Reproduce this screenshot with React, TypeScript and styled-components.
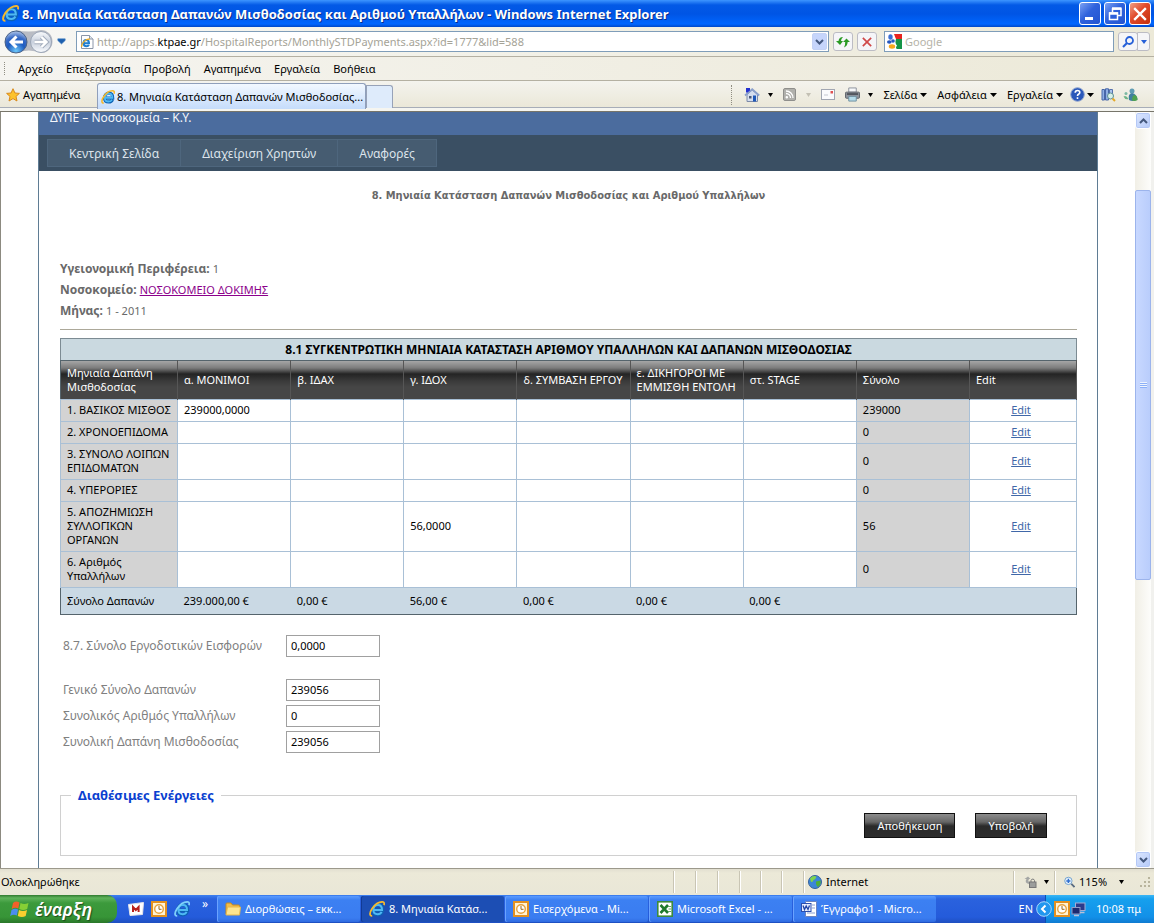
import React from "react";
import styled, { createGlobalStyle } from "styled-components";

const Global = createGlobalStyle`
  *, *::before, *::after { box-sizing: border-box; }
  body { margin: 0; font-family: "Noto Sans", "DejaVu Sans", sans-serif; font-size: 11px; line-height: 16px; color: #000; }
  button, input { font: inherit; color: inherit; margin: 0; }
  svg { display: block; flex: none; }
`;

/* ---------- icons ---------- */

const IeIcon = ({ size = 16, ring = "#f5b92e" }: { size?: number; ring?: string }) => (
  <svg width={size} height={size} viewBox="0 0 16 16" fill="none">
    <path d="M4.500 9.200H13.400C13.600 5.400 11.800 3.600 9 3.600S4 5.800 4 9s2 4.600 4.800 4.600c2.200 0 3.600-1 4.300-2.700" stroke="#0d62b4" strokeWidth="3.600" />
    <path d="M4.500 8.900H13C13 5.600 11.600 4 9 4S4.400 6 4.400 9s1.800 4.200 4.400 4.200c2 0 3.100-.9 3.800-2.300" stroke="#4fb9f4" strokeWidth="2" />
    <path d="M3.200 14.800C.2 15.200.4 11.500 3.200 7.400 6 3.400 10.500.800 13.600.900c1.700.1 2 1.600 1.300 3.300" stroke={ring} strokeWidth="1.800" />
  </svg>
);

const PageIcon = () => (
  <svg width="14" height="14" viewBox="0 0 14 14">
    <path d="M1.500.5H9.500L13 4V13.500H1.500Z" fill="#fff" stroke="#8b96a8" />
    <path d="M9.500.5V4H13" fill="#dfe5ee" stroke="#8b96a8" />
    <path d="M3.500 8.300H9C9 6 8 5 6.300 5S3.500 6.300 3.500 8.300s1.100 3 3 3c1.100 0 2-.5 2.400-1.400" fill="none" stroke="#1f7ed0" strokeWidth="2" />
    <path d="M1.500 12C1 8.500 5.500 3.800 9.800 4" fill="none" stroke="#e9ad2a" strokeWidth="1.300" />
  </svg>
);

const NavArrows = () => (
  <svg width="50" height="26" viewBox="0 0 50 26">
    <defs>
      <radialGradient id="back" cx="50%" cy="90%" r="90%">
        <stop offset="0" stopColor="#6cc8fa" />
        <stop offset=".45" stopColor="#1f5cc0" />
        <stop offset=".7" stopColor="#3a6cc6" />
        <stop offset="1" stopColor="#b4c8ea" />
      </radialGradient>
      <linearGradient id="fwd" x1="0" y1="0" x2="0" y2="1">
        <stop offset="0" stopColor="#fafbfd" />
        <stop offset=".5" stopColor="#c8d0dd" />
        <stop offset="1" stopColor="#fafcff" />
      </linearGradient>
    </defs>
    <path d="M12 1Q25 4 37 1A11.500 11.500 0 0 1 37 24Q25 19 12 24Z" fill="#b9bcc4" />
    <circle cx="12" cy="13" r="11" fill="url(#back)" stroke="#4b6286" />
    <circle cx="37" cy="13" r="10.500" fill="url(#fwd)" stroke="#9aa5b6" />
    <path d="M19 13H7M12.500 7.500L7 13L12.500 18.500" fill="none" stroke="#fff" strokeWidth="3" />
    <path d="M30.500 13H42M37.500 8L42.500 13L37.500 18" fill="none" stroke="#a3adbd" strokeWidth="4.400" />
    <path d="M30.500 13H42M37.500 8L42.500 13L37.500 18" fill="none" stroke="#fff" strokeWidth="2.400" />
  </svg>
);

const HistoryArrow = () => (
  <svg width="9" height="7" viewBox="0 0 9 7">
    <path d="M.8.8H8.200V2.500L4.500 6L.8 2.500Z" fill="#1d5fae" stroke="#4e86c4" strokeWidth=".6" />
  </svg>
);

const Triangle = ({ color = "#000", w = 7 }: { color?: string; w?: number }) => (
  <svg width={w} height="4" viewBox="0 0 8 4" preserveAspectRatio="none">
    <path d="M0 0H8L4 4Z" fill={color} />
  </svg>
);

const Chevron = ({ up }: { up?: boolean }) => (
  <svg width="9" height="6" viewBox="0 0 9 6" fill="none" stroke="#44587e" strokeWidth="2">
    <path d={up ? "M1 5L4.500 1.500L8 5" : "M1 1L4.500 4.500L8 1"} />
  </svg>
);

const StarIcon = () => (
  <svg width="14" height="14" viewBox="0 0 14 14">
    <path d="M7 .7L8.900 5L13.400 5.400L10 8.400L11 13L7 10.600L3 13L4 8.400L.6 5.400L5.100 5Z" fill="#fdc22c" stroke="#d98a1c" />
  </svg>
);

const RefreshIcon = () => (
  <svg width="14" height="12" viewBox="0 0 14 12" fill="#2a9a24">
    <path d="M0 5L4 9L7 5H5Q5 3 7 1Q3 1 2.500 5Z" />
    <path d="M7 6L10.500 2.500L14 6H11.700Q11.500 10 8 11.500Q9.300 9.500 9.200 6Z" />
  </svg>
);

const CrossIcon = ({ color, size = 12 }: { color: string; size?: number }) => (
  <svg width={size} height={size} viewBox="0 0 12 12" stroke={color} strokeWidth="2">
    <path d="M1 1L11 11M11 1L1 11" />
  </svg>
);

const GoogleMark = () => (
  <svg width="15" height="15" viewBox="0 0 15 15">
    <rect width="15" height="15" fill="#fff" />
    <path d="M7 0H15V5H9Q8 3 7 0Z" fill="#e8251f" />
    <path d="M9 5H15V15H10Q8 14 10 11.500Q7.500 9 9 5Z" fill="#159447" />
    <ellipse cx="3.500" cy="3" rx="2.200" ry="2.700" fill="#3b6fd4" />
    <ellipse cx="2.300" cy="8" rx="2.300" ry="1.800" fill="#2457c0" />
    <circle cx="6" cy="7" r="1.800" fill="#2457c0" />
    <ellipse cx="5" cy="12.500" rx="3.200" ry="2.200" fill="#f5a81c" />
  </svg>
);

const SearchIcon = () => (
  <svg width="12" height="12" viewBox="0 0 12 12" fill="none" stroke="#2760d8">
    <circle cx="7.500" cy="4.500" r="3.500" strokeWidth="1.800" />
    <path d="M5 7L1 11" strokeWidth="2.200" />
  </svg>
);

const HomeIcon = () => (
  <svg width="16" height="16" viewBox="0 0 16 16">
    <path d="M3 7.500V14.500H13.500V7.500L8.200 3Z" fill="#d5deef" stroke="#7c8aa8" />
    <path d="M1 8.500L8.200 2.200L15.200 8.500" fill="none" stroke="#8ba0cc" strokeWidth="1.800" />
    <path d="M2 1H6V3.500L3.500 5.500H2Z" fill="#2431d0" />
    <path d="M5 9H7.500V11.500H5Z" fill="#4b5a78" />
    <path d="M9 8.500H12V14.500H9Z" fill="#1e58b8" />
  </svg>
);

const FeedIcon = () => (
  <svg width="13" height="13" viewBox="0 0 13 13" fill="none" stroke="#fff" strokeWidth="1.300">
    <rect x=".5" y=".5" width="12" height="12" rx="1.500" fill="#b0b0ac" stroke="#8f8f8c" strokeWidth="1" />
    <path d="M3 5.500A4.500 4.500 0 0 1 7.500 10M3 3A7 7 0 0 1 10 10" />
    <circle cx="3.800" cy="9.300" r=".6" fill="#fff" />
  </svg>
);

const MailIcon = () => (
  <svg width="14" height="11" viewBox="0 0 14 11">
    <rect x=".5" y=".5" width="13" height="10" fill="#fbfbfd" stroke="#a1a6b2" />
    <path d="M9.500 2H12V4.500H9.500Z" fill="#e05050" />
    <path d="M3 6H7" stroke="#c3c7d0" />
  </svg>
);

const PrintIcon = () => (
  <svg width="15" height="15" viewBox="0 0 16 15">
    <path d="M4 .5H12V5H4Z" fill="#f7f8fa" stroke="#8a8f9a" />
    <rect x=".5" y="5" width="15" height="6.500" rx="1" fill="#8f949c" stroke="#5b6068" />
    <path d="M2 7H14" stroke="#3c4048" strokeWidth="1.500" />
    <path d="M4 9.500H12V14.500H4Z" fill="#b5dcea" stroke="#6d8fa0" />
  </svg>
);

const HelpIcon = () => (
  <svg width="15" height="15" viewBox="0 0 15 15">
    <circle cx="7.500" cy="7.500" r="6.800" fill="#2a58ba" stroke="#8fa4cf" />
    <path d="M5.200 5.800Q5.200 3.500 7.500 3.500T9.800 5.500Q9.800 6.700 8.500 7.300Q7.500 7.800 7.500 9M7.500 10.300V12" fill="none" stroke="#fff" strokeWidth="1.600" />
  </svg>
);

const ResearchIcon = () => (
  <svg width="15" height="14" viewBox="0 0 15 14">
    <path d="M1 1.500H3.500V12H1ZM4.500.8H7.500V12H4.500Z" fill="#8faee4" stroke="#4766a8" />
    <path d="M8.500 1.500L11.500 1.500V9H8.500Z" fill="#a9c3ee" stroke="#5671ac" />
    <circle cx="9.500" cy="8" r="3" fill="#d7f0ea" stroke="#5c8f91" />
    <path d="M11.500 10.500L14 13" stroke="#e5a928" strokeWidth="2" />
  </svg>
);

const MessengerIcon = () => (
  <svg width="15" height="14" viewBox="0 0 15 14">
    <circle cx="9" cy="3" r="2.500" fill="#5f9cb4" />
    <path d="M6 12Q4.500 6 9 5Q14 6 14.500 11.500Q10 14 6 12Z" fill="#3f7f9f" />
    <path d="M9 12.500Q9 7 12 7Q14.500 8 14.500 12Q12 13.500 9 12.500Z" fill="#4ea24f" />
    <path d="M.5 8.500Q3 6.500 5.500 11Q2 12 .5 8.500Z" fill="#6db487" />
    <circle cx="3" cy="5.500" r="1.500" fill="#7cb8a4" />
  </svg>
);

const GlobeIcon = () => (
  <svg width="14" height="14" viewBox="0 0 14 14">
    <circle cx="7" cy="7" r="6.500" fill="#3c86d8" stroke="#34609c" />
    <path d="M2 3.500Q5 0 8.500 1.500Q8 4 5.500 5Q5 7.500 3 7Z" fill="#7fd44c" />
    <path d="M8 6.500L12.500 5.500Q13.500 9 10 12Q7.500 10 8 6.500Z" fill="#4fae3a" />
  </svg>
);

const LockIcon = () => (
  <svg width="14" height="12" viewBox="0 0 14 12">
    <path d="M6 8Q1 7 3.500 3H1.500L5 .5L7.500 3H6Q4.500 5 6 6Z" fill="#a4a6a4" />
    <rect x="6.500" y="6" width="6.500" height="5.500" fill="#9b9d9c" stroke="#777" />
    <path d="M8 6V4.500A1.800 1.800 0 0 1 11.500 4.500V6" fill="none" stroke="#777" />
  </svg>
);

const ZoomIcon = () => (
  <svg width="11" height="12" viewBox="0 0 12 12">
    <circle cx="4.800" cy="4.800" r="4" fill="#e9f4fd" stroke="#6c9cc9" />
    <path d="M2.500 4.800H7M4.800 2.500V7" stroke="#2d6ed0" strokeWidth="1.600" />
    <path d="M8 8L11.500 11.500" stroke="#596b80" strokeWidth="2" />
  </svg>
);

const FlagIcon = () => (
  <svg width="20" height="19" viewBox="0 0 20 19">
    <path d="M3 3Q6 .5 9.500 2.500L8.300 8.500Q5 6.800 1.700 9Z" fill="#f2602a" />
    <path d="M10.500 3Q14 5 18.500 3L17.200 9Q13 11 9.300 9Z" fill="#86cf35" />
    <path d="M1.500 10Q5 7.800 8.100 9.500L6.800 15.500Q3.500 14 .2 16Z" fill="#4c8df0" />
    <path d="M9 10Q13 12 17 10L15.700 16Q12 18 7.800 16Z" fill="#fbcf2f" />
  </svg>
);

const MBadge = () => (
  <svg width="16" height="14" viewBox="0 0 16 14">
    <path d="M.5 2.500L15.500 .5L14.500 12.500L2 13.500Z" fill="#fff" stroke="#e4e4ea" />
    <path d="M5 10V5L7.800 8L10.600 5V10" fill="none" stroke="#b8201c" strokeWidth="2" />
  </svg>
);

const OutlookIcon = () => (
  <svg width="16" height="16" viewBox="0 0 16 16">
    <rect x="1" y="1" width="14" height="14" fill="#fff3d4" stroke="#e39120" strokeWidth="2" />
    <circle cx="8" cy="8" r="4.300" fill="#fff" stroke="#e8a23c" strokeWidth="1.400" />
    <path d="M8 5V8.300H10.500" fill="none" stroke="#9a6a1c" />
  </svg>
);

const FolderIcon = () => (
  <svg width="16" height="14" viewBox="0 0 16 14">
    <path d="M1 12V2Q1 1 2 1H6L7.500 3H13.500Q14.500 3 14.500 4V12Z" fill="#f1bd4a" stroke="#c58a1e" />
    <path d="M1 13L2.500 5H15.500L14.500 13Z" fill="#fde58e" stroke="#e6b84b" />
  </svg>
);

const ExcelIcon = () => (
  <svg width="16" height="16" viewBox="0 0 16 16">
    <rect x=".8" y=".8" width="14.400" height="14.400" fill="#fff" stroke="#3c8a3c" strokeWidth="1.600" />
    <path d="M3.500 4L11 12M11 4L3.500 12" stroke="#1f7a2c" strokeWidth="2.600" />
    <path d="M11 5.500H14M11.500 8H14M11 10.500H14" stroke="#62a862" />
  </svg>
);

const WordIcon = () => (
  <svg width="16" height="16" viewBox="0 0 16 16">
    <path d="M4.500.5H15.500V15.500H4.500Z" fill="#fff" stroke="#6c83c0" />
    <path d="M11 4H14M11 7H14M6 12H14" stroke="#8b9fd4" />
    <rect x=".5" y="2.500" width="9.500" height="8" fill="#e8eeff" stroke="#2c4fae" />
    <path d="M2 4.500L3.500 8.500L5.200 5L7 8.500L8.500 4.500" fill="none" stroke="#2246a8" strokeWidth="1.300" />
  </svg>
);

const TrayArrow = () => (
  <svg width="16" height="16" viewBox="0 0 16 16">
    <circle cx="8" cy="8" r="7.300" fill="#2196ee" stroke="#a8d8fb" />
    <path d="M9.500 4.500L6 8L9.500 11.500" fill="none" stroke="#fff" strokeWidth="2" />
  </svg>
);

const NetworkIcon = () => (
  <svg width="15" height="15" viewBox="0 0 15 15">
    <rect x="4.500" y="1" width="9.500" height="7.500" fill="#2b3b8c" stroke="#a4aed4" />
    <rect x="1" y="5.500" width="8" height="6.500" fill="#1c2a70" stroke="#8f9bc6" />
    <path d="M3 13.500H8M9 10.500H13.500" stroke="#b9c0d8" strokeWidth="1.600" />
  </svg>
);

const ResizeGrip = () => (
  <svg width="10" height="10" viewBox="0 0 10 10" fill="#b8b49c">
    <path d="M8 0H10V2H8ZM8 4H10V6H8ZM4 4H6V6H4ZM8 8H10V10H8ZM4 8H6V10H4ZM0 8H2V10H0Z" />
  </svg>
);

/* ---------- browser chrome ---------- */

const Window = styled.div`
  height: 100vh;
  display: flex;
  flex-direction: column;
  background: #ece9d8;
  overflow: hidden;
`;

const TitleBar = styled.header`
  flex: none;
  height: 27px;
  display: flex;
  align-items: center;
  gap: 3px;
  padding: 0 3px 0 2px;
  background: linear-gradient(#3d95ff 0, #0359e6 5px, #0055e5 14px, #0066ff 24px, #0048c8 27px);
`;

const WindowTitle = styled.h1`
  margin: 0;
  flex: 1;
  font-size: 13px;
  font-weight: 700;
  color: #fff;
  text-shadow: 1px 1px #0a2f8a;
  white-space: nowrap;
`;

const CaptionButton = styled.button<{ $danger?: boolean }>`
  width: 22px;
  height: 23px;
  padding: 0;
  display: flex;
  align-items: center;
  justify-content: center;
  border: 1px solid #fff;
  border-radius: 3px;
  background: ${(p) =>
    p.$danger ? "linear-gradient(135deg, #f0a086, #e0492a 45%, #c4300c)" : "linear-gradient(135deg, #7ba1f3, #2f62dc 45%, #2254d0)"};
`;

const CaptionButtons = styled.div`
  display: flex;
  gap: 3px;
`;

const AddressRow = styled.div`
  flex: none;
  height: 30px;
  display: flex;
  align-items: center;
  padding: 0 4px;
  background: linear-gradient(90deg, #f7f7f4, #ece9d8);
  border-bottom: 1px solid #b4b0a2;
`;

const Plain = styled.button`
  padding: 0;
  border: 0;
  background: none;
  display: flex;
  align-items: center;
  gap: 3px;
  white-space: nowrap;
`;

const AddressBox = styled.div`
  flex: 1;
  height: 21px;
  margin-left: 10px;
  display: flex;
  align-items: center;
  gap: 3px;
  padding: 0 1px 0 3px;
  background: #fff;
  border: 1px solid #7f9db9;
`;

const Url = styled.div`
  flex: 1;
  color: #a5a397;
  white-space: nowrap;
  b { color: #000; font-weight: 400; }
`;

const DropButton = styled.button`
  width: 15px;
  height: 17px;
  padding: 0;
  display: grid;
  place-items: center;
  border: 1px solid #c4d2f4;
  border-radius: 2px;
  background: #c6d5fb;
`;

const ToolButton = styled.button<{ $w?: number }>`
  width: ${(p) => p.$w ?? 20}px;
  height: 19px;
  padding: 0;
  margin-left: 4px;
  display: grid;
  place-items: center;
  border: 1px solid #bcbcc4;
  border-radius: 3px;
  background: #f5f5f8;
`;

const SearchBox = styled.label`
  width: 230px;
  height: 21px;
  margin-left: 7px;
  display: flex;
  align-items: center;
  gap: 3px;
  padding: 0 2px;
  background: #fff;
  border: 1px solid #7f9db9;
`;

const SearchInput = styled.input`
  flex: 1;
  min-width: 0;
  border: 0;
  padding: 0;
  outline: 0;
  background: none;
  &::placeholder { color: #b5b3a8; opacity: 1; }
`;

const SplitGroup = styled.div`
  display: flex;
  ${ToolButton}:last-child { margin-left: -1px; border-radius: 0 3px 3px 0; }
`;

const MenuBar = styled.nav`
  flex: none;
  height: 24px;
  display: flex;
  align-items: center;
  gap: 13px;
  padding-left: 4px;
  background: linear-gradient(90deg, #f5f4f0, #ece9d8);
  border-bottom: 1px solid #b4b0a2;
`;

const Grip = styled.span<{ $h: number }>`
  width: 0;
  height: ${(p) => p.$h}px;
  border-left: 1px dotted #8f8d82;
`;

const TabRow = styled.div`
  flex: none;
  height: 31px;
  display: flex;
  align-items: flex-start;
  padding-left: 6px;
  background: linear-gradient(#f4f3ee, #e9e6d5);
  border-bottom: 1px solid #77756a;
  box-shadow: inset 0 -3px #f5f5f0, inset 0 -4px #a7adb8;
`;

const Favorites = styled(Plain)`
  width: 91px;
  height: 27px;
`;

const Tab = styled.button`
  width: 269px;
  height: 26px;
  margin-top: 2px;
  padding: 0 3px;
  display: flex;
  align-items: center;
  gap: 2px;
  border: 1px solid #8f9fbb;
  border-bottom: 0;
  border-radius: 3px 3px 0 0;
  background: linear-gradient(#f2f8ff, #c5dcfb);
  white-space: nowrap;
`;

const NewTab = styled.button`
  width: 27px;
  height: 23px;
  margin-top: 4px;
  padding: 0;
  border: 1px solid #97a2b8;
  border-bottom: 0;
  border-radius: 0 3px 0 0;
  background: #deebfb;
`;

const CommandBar = styled.div`
  margin-left: auto;
  height: 27px;
  padding-right: 16px;
  display: flex;
  align-items: center;
  gap: 10px;
`;

const CommandGroup = styled.div<{ $gap: number }>`
  display: flex;
  align-items: center;
  gap: ${(p) => p.$gap}px;
`;

/* ---------- page ---------- */

const Viewport = styled.div`
  flex: 1;
  min-height: 0;
  display: flex;
  background: #fff;
  border-left: 1px solid #8c8a80;
`;

const Page = styled.main`
  flex: 1;
  min-width: 0;
  margin: 0 37px;
  border: solid #5f7c94;
  border-width: 0 1px;
  overflow: hidden;
  color: #696969;
`;

const Band = styled.div`
  height: 23px;
  padding-left: 11px;
  background: #4b6c9e;
  color: #f3f6fb;
  font-size: 12px;
  line-height: 12px;
`;

const SiteNav = styled.nav`
  height: 36px;
  padding: 4px 8px;
  display: flex;
  background: #3a4f63;
`;

const SiteLink = styled.a`
  padding: 0 21px;
  border: 1px solid #4e667d;
  margin-right: -1px;
  background: #465c71;
  color: #dde4ec;
  font-size: 12px;
  line-height: 28px;
  text-decoration: none;
`;

const Body = styled.div`
  padding: 16px 20px 0 21px;
`;

const PageTitle = styled.h2`
  margin: 0 0 53px;
  text-align: center;
  font-family: "DejaVu Sans Condensed", "DejaVu Sans", sans-serif;
  font-size: 11px;
  line-height: 18px;
  font-weight: 700;
`;

const Info = styled.p`
  margin: 0;
  font-size: 12px;
  line-height: 21px;
  span { font-size: 11px; }
`;

const VisitedLink = styled.a`
  font-size: 11px;
  color: #8b008b;
`;

const Rule = styled.hr`
  margin: 8px 0;
  border: 0;
  border-top: 1px solid #aca899;
`;

const Grid = styled.table`
  width: 100%;
  table-layout: fixed;
  border-collapse: collapse;
  border: 1px solid #55646c;
  color: #000;
  line-height: 14px;
  caption {
    height: 22px;
    border: 1px solid #7c8b93;
    border-bottom: 0;
    background: #cad9e0;
    font-size: 12px;
    font-weight: 700;
    line-height: 21px;
  }
  th, td { text-align: left; vertical-align: middle; font-weight: 400; padding: 3px 0 4px 6px; }
`;

const HeadRow = styled.tr`
  height: 39px;
  background: linear-gradient(#a6a6a6 0, #7c7c7c 7px, #242424 13px, #3a3a3a 20px, #464646 26px);
  color: #fff;
  th { border-right: 1px solid #565656; }
`;

const DataRow = styled.tr`
  td, th { border: 1px solid #a9c0d6; }
`;

const RowHead = styled.th`
  background: #d3d3d3;
`;

const SumCell = styled.td`
  background: #d3d3d3;
`;

const EditCell = styled.td`
  && { text-align: center; padding-left: 0; padding-right: 4px; }
  a { color: #4067a8; }
`;

const FootRow = styled.tr`
  height: 27px;
  background: #cad9e4;
`;

const Fields = styled.div<{ $top: number }>`
  margin-top: ${(p) => p.$top}px;
  padding-left: 3px;
  display: grid;
  grid-template-columns: 223px 94px;
  row-gap: 4px;
  align-items: center;
`;

const FieldLabel = styled.label`
  font-size: 12px;
  color: #808080;
`;

const FieldInput = styled.input`
  height: 22px;
  padding: 0 4px 2px;
  border: 1px solid #a0a0a0;
  background: #fff;
  color: #000;
  min-width: 0;
`;

const Actions = styled.fieldset`
  margin: 32px 0 0;
  padding: 8px 29px 17px 10px;
  min-width: 0;
  display: flex;
  justify-content: flex-end;
  border: 1px solid #d0d0d0;
`;

const ActionsLegend = styled.legend`
  padding: 0 7px;
  color: #0a3fd0;
  font-size: 13px;
  line-height: 20px;
  font-weight: 700;
`;

const DarkButton = styled.button`
  height: 25px;
  padding: 0 12px;
  margin-left: 20px;
  border: 1px solid #111;
  background: linear-gradient(#8d8d8d 0, #666 8px, #2a2a2a 12px, #2e2e2e 25px);
  color: #fff;
  font-size: 11px;
`;

const ScrollTrack = styled.div`
  width: 19px;
  flex: none;
  display: flex;
  flex-direction: column;
  padding-right: 3px;
  background: linear-gradient(90deg, #f1efe6, #fdfdfb 16px, #f1f1ee 16px);
`;

const ScrollButton = styled.button`
  height: 17px;
  padding: 0;
  display: grid;
  place-items: center;
  border: 1px solid #fff;
  border-radius: 3px;
  background: linear-gradient(135deg, #dbe6ff, #b5caf8);
  box-shadow: inset 0 0 0 1px #b4c8f6;
`;

const ThumbArea = styled.div`
  flex: 1;
  display: flex;
  flex-direction: column;
  padding-top: 61px;
`;

const Thumb = styled.div`
  flex: 0 0 59%;
  display: grid;
  place-items: center;
  border: 1px solid #9cb4ec;
  border-radius: 2px;
  background: linear-gradient(90deg, #c8d8ff, #b9cdfc);
`;

const ThumbGrip = styled.span`
  width: 7px;
  height: 6px;
  background: repeating-linear-gradient(#eef4fe 0 1px, #8cb0f8 1px 2px);
`;

/* ---------- status bar and taskbar ---------- */

const StatusBar = styled.footer`
  flex: none;
  height: 27px;
  display: flex;
  align-items: center;
  padding: 0 4px 0 1px;
  border-top: 1px solid #9c998c;
  background: linear-gradient(#e2dfd0, #ece9d8 4px, #e9e7d7);
`;

const StatusText = styled.span`
  flex: 1;
`;

const Pane = styled.div<{ $w: number; $gap?: number; $pad?: number }>`
  width: ${(p) => p.$w}px;
  height: 22px;
  display: flex;
  align-items: center;
  gap: ${(p) => p.$gap ?? 4}px;
  padding-left: ${(p) => p.$pad ?? 4}px;
  border-left: 1px solid #c9c5b4;
  box-shadow: inset 1px 0 #fff;
`;

const ZoomLevel = styled.span`
  margin-right: 8px;
`;

const Taskbar = styled.div`
  flex: none;
  height: 28px;
  display: flex;
  background: linear-gradient(#3c81f0 0, #2a62de 4px, #245bdb 22px, #1e4fc0 28px);
  color: #fff;
`;

const StartButton = styled.button`
  width: 117px;
  padding: 0 0 0 10px;
  display: flex;
  align-items: center;
  gap: 5px;
  border: 0;
  border-radius: 0 10px 10px 0;
  background: linear-gradient(#2f7a2f 0, #5fb35c 3px, #3c9a3c 8px, #379537 22px, #2a772a 28px);
  color: #fff;
  font-size: 18px;
  line-height: 24px;
  font-weight: 600;
  font-style: italic;
  text-shadow: 1px 1px 1px #1d4c1d;
`;

const QuickLaunch = styled.div`
  width: 100px;
  display: flex;
  align-items: center;
  gap: 7px;
  padding-left: 11px;
`;

const More = styled.span`
  font-size: 12px;
  line-height: 12px;
  padding: 0 0 10px 5px;
`;

const Task = styled.button<{ $active?: boolean }>`
  flex: 0 1 143px;
  min-width: 0;
  padding: 0 0 0 8px;
  margin: 1px 1px 1px 0;
  display: flex;
  align-items: center;
  gap: 4px;
  border: 0;
  border-radius: 2px;
  background: ${(p) => (p.$active ? "#1c4eb4" : "linear-gradient(#5a9bff, #3c80f2 4px, #3a7cf0 22px, #2f6be0)")};
  box-shadow: inset 1px 0 ${(p) => (p.$active ? "#123a94" : "#6aa3ff")};
  white-space: nowrap;
`;

const Language = styled.span`
  margin-left: auto;
  padding-right: 12px;
  align-self: center;
`;

const Tray = styled.div`
  width: 109px;
  position: relative;
  display: flex;
  align-items: center;
  gap: 1px;
  padding-left: 8px;
  border-left: 1px solid #0c4fb0;
  background: linear-gradient(#3ab6f5 0, #16a0ee 4px, #1290e8 22px, #0f7bd0);
  time { margin-left: 9px; white-space: nowrap; }
`;

const TrayToggle = styled(Plain)`
  position: absolute;
  left: -10px;
  top: 6px;
`;

const menus = ["Αρχείο", "Επεξεργασία", "Προβολή", "Αγαπημένα", "Εργαλεία", "Βοήθεια"];
const siteLinks = ["Κεντρική Σελίδα", "Διαχείριση Χρηστών", "Αναφορές"];
const columns = ["α. ΜΟΝΙΜΟΙ", "β. ΙΔΑΧ", "γ. ΙΔΟΧ", "δ. ΣΥΜΒΑΣΗ ΕΡΓΟΥ", "ε. ΔΙΚΗΓΟΡΟΙ ΜΕ ΕΜΜΙΣΘΗ ΕΝΤΟΛΗ", "στ. STAGE", "Σύνολο", "Edit"];
const rows = [
  { name: "1. ΒΑΣΙΚΟΣ ΜΙΣΘΟΣ", values: ["239000,0000", "", "", "", "", ""], sum: "239000" },
  { name: "2. ΧΡΟΝΟΕΠΙΔΟΜΑ", values: ["", "", "", "", "", ""], sum: "0" },
  { name: "3. ΣΥΝΟΛΟ ΛΟΙΠΩΝ ΕΠΙΔΟΜΑΤΩΝ", values: ["", "", "", "", "", ""], sum: "0" },
  { name: "4. ΥΠΕΡΟΡΙΕΣ", values: ["", "", "", "", "", ""], sum: "0" },
  { name: "5. ΑΠΟΖΗΜΙΩΣΗ ΣΥΛΛΟΓΙΚΩΝ ΟΡΓΑΝΩΝ", values: ["", "", "56,0000", "", "", ""], sum: "56" },
  { name: "6. Αριθμός Υπαλλήλων", values: ["", "", "", "", "", ""], sum: "0" },
];
const totals = ["239.000,00 €", "0,00 €", "56,00 €", "0,00 €", "0,00 €", "0,00 €"];
const summary = [
  { id: "grand", label: "Γενικό Σύνολο Δαπανών", value: "239056" },
  { id: "count", label: "Συνολικός Αριθμός Υπαλλήλων", value: "0" },
  { id: "cost", label: "Συνολική Δαπάνη Μισθοδοσίας", value: "239056" },
];

export default function App() {
  return (
    <Window>
      <Global />
      <TitleBar>
        <IeIcon size={17} />
        <WindowTitle>8. Μηνιαία Κατάσταση Δαπανών Μισθοδοσίας και Αριθμού Υπαλλήλων - Windows Internet Explorer</WindowTitle>
        <CaptionButtons>
          <CaptionButton aria-label="Ελαχιστοποίηση">
            <svg width="14" height="14" viewBox="0 0 14 14"><path d="M2 10H10V13H2Z" fill="#fff" /></svg>
          </CaptionButton>
          <CaptionButton aria-label="Επαναφορά">
            <svg width="14" height="14" viewBox="0 0 14 14" fill="none" stroke="#fff">
              <path d="M4.500 5V2H13V8.500H10" strokeWidth="1.500" />
              <path d="M4 1.500H13.500" strokeWidth="2.500" />
              <path d="M1.500 6H9.500V12.500H1.500Z" strokeWidth="1.500" />
              <path d="M1 6.500H10" strokeWidth="2.500" />
            </svg>
          </CaptionButton>
          <CaptionButton $danger aria-label="Κλείσιμο"><CrossIcon color="#fff" size={14} /></CaptionButton>
        </CaptionButtons>
      </TitleBar>

      <AddressRow>
        <Plain aria-label="Πίσω και εμπρός"><NavArrows /><HistoryArrow /></Plain>
        <AddressBox>
          <PageIcon />
          <Url>http://apps.<b>ktpae.gr</b>/HospitalReports/MonthlySTDPayments.aspx?id=1777&amp;lid=588</Url>
          <DropButton aria-label="Διευθύνσεις"><Chevron /></DropButton>
        </AddressBox>
        <ToolButton aria-label="Ανανέωση"><RefreshIcon /></ToolButton>
        <ToolButton aria-label="Διακοπή"><CrossIcon color="#d04848" size={10} /></ToolButton>
        <SearchBox>
          <GoogleMark />
          <SearchInput placeholder="Google" aria-label="Αναζήτηση" />
        </SearchBox>
        <SplitGroup>
          <ToolButton aria-label="Αναζήτηση"><SearchIcon /></ToolButton>
          <ToolButton $w={13} aria-label="Επιλογές αναζήτησης"><Triangle color="#2760d8" w={6} /></ToolButton>
        </SplitGroup>
      </AddressRow>

      <MenuBar>
        <Grip $h={13} />
        {menus.map((m) => <Plain key={m}>{m}</Plain>)}
      </MenuBar>

      <TabRow>
        <Favorites><StarIcon />Αγαπημένα</Favorites>
        <Tab><IeIcon size={14} />8. Μηνιαία Κατάσταση Δαπανών Μισθοδοσίας...</Tab>
        <NewTab aria-label="Νέα καρτέλα" />
        <CommandBar>
          <CommandGroup $gap={12}>
            <Grip $h={20} />
            <CommandGroup $gap={8}><HomeIcon /><Triangle w={5} /></CommandGroup>
          </CommandGroup>
          <CommandGroup $gap={10}><FeedIcon /><Triangle w={5} color="#c3c0b4" /></CommandGroup>
          <MailIcon />
          <CommandGroup $gap={8}><PrintIcon /><Triangle w={5} /></CommandGroup>
          <Plain>Σελίδα<Triangle /></Plain>
          <Plain>Ασφάλεια<Triangle /></Plain>
          <CommandGroup $gap={7}>
            <Plain>Εργαλεία<Triangle /></Plain>
            <CommandGroup $gap={2}><HelpIcon /><Triangle /></CommandGroup>
            <ResearchIcon />
            <MessengerIcon />
          </CommandGroup>
        </CommandBar>
      </TabRow>

      <Viewport>
        <Page>
          <Band>ΔΥΠΕ – Νοσοκομεία – Κ.Υ.</Band>
          <SiteNav>{siteLinks.map((l) => <SiteLink href="#" key={l}>{l}</SiteLink>)}</SiteNav>
          <Body>
            <PageTitle>8. Μηνιαία Κατάσταση Δαπανών Μισθοδοσίας και Αριθμού Υπαλλήλων</PageTitle>
            <Info><b>Υγειονομική Περιφέρεια:</b> <span>1</span></Info>
            <Info><b>Νοσοκομείο:</b> <VisitedLink href="#">ΝΟΣΟΚΟΜΕΙΟ ΔΟΚΙΜΗΣ</VisitedLink></Info>
            <Info><b>Μήνας:</b> <span>1 - 2011</span></Info>
            <Rule />
            <Grid>
              <caption>8.1 ΣΥΓΚΕΝΤΡΩΤΙΚΗ ΜΗΝΙΑΙΑ ΚΑΤΑΣΤΑΣΗ ΑΡΙΘΜΟΥ ΥΠΑΛΛΗΛΩΝ ΚΑΙ ΔΑΠΑΝΩΝ ΜΙΣΘΟΔΟΣΙΑΣ</caption>
              <colgroup>
                <col width="117" />
                {columns.slice(1).map((c) => <col key={c} />)}
                <col width="107" />
              </colgroup>
              <thead>
                <HeadRow>
                  <th scope="col">Μηνιαία Δαπάνη Μισθοδοσίας</th>
                  {columns.map((c) => <th scope="col" key={c}>{c}</th>)}
                </HeadRow>
              </thead>
              <tbody>
                {rows.map((r) => (
                  <DataRow key={r.name}>
                    <RowHead scope="row">{r.name}</RowHead>
                    {r.values.map((v, i) => <td key={i}>{v}</td>)}
                    <SumCell>{r.sum}</SumCell>
                    <EditCell><a href="#">Edit</a></EditCell>
                  </DataRow>
                ))}
              </tbody>
              <tfoot>
                <FootRow>
                  <th scope="row">Σύνολο Δαπανών</th>
                  {totals.map((t, i) => <td key={i}>{t}</td>)}
                  <td />
                  <td />
                </FootRow>
              </tfoot>
            </Grid>
            <Fields $top={20}>
              <FieldLabel htmlFor="employer">8.7. Σύνολο Εργοδοτικών Εισφορών</FieldLabel>
              <FieldInput id="employer" defaultValue="0,0000" />
            </Fields>
            <Fields $top={22}>
              {summary.map((f) => (
                <React.Fragment key={f.id}>
                  <FieldLabel htmlFor={f.id}>{f.label}</FieldLabel>
                  <FieldInput id={f.id} defaultValue={f.value} />
                </React.Fragment>
              ))}
            </Fields>
            <Actions>
              <ActionsLegend>Διαθέσιμες Ενέργειες</ActionsLegend>
              <DarkButton>Αποθήκευση</DarkButton>
              <DarkButton>Υποβολή</DarkButton>
            </Actions>
          </Body>
        </Page>
        <ScrollTrack>
          <ScrollButton aria-label="Επάνω"><Chevron up /></ScrollButton>
          <ThumbArea><Thumb><ThumbGrip /></Thumb></ThumbArea>
          <ScrollButton aria-label="Κάτω"><Chevron /></ScrollButton>
        </ScrollTrack>
      </Viewport>

      <StatusBar>
        <StatusText>Ολοκληρώθηκε</StatusText>
        <Pane $w={22} /><Pane $w={22} /><Pane $w={22} /><Pane $w={21} /><Pane $w={21} /><Pane $w={22} />
        <Pane $w={210}><GlobeIcon />Internet</Pane>
        <Pane $w={41} $gap={7} $pad={9}><LockIcon /><Triangle w={5} /></Pane>
        <Pane $w={86} $pad={9}><ZoomIcon /><ZoomLevel>115%</ZoomLevel><Triangle w={5} /></Pane>
        <ResizeGrip />
      </StatusBar>

      <Taskbar>
        <StartButton><FlagIcon />έναρξη</StartButton>
        <QuickLaunch><MBadge /><OutlookIcon /><IeIcon ring="#7fd0fa" /><More>»</More></QuickLaunch>
        <Task><FolderIcon />Διορθώσεις – εκκ...</Task>
        <Task $active><IeIcon />8. Μηνιαία Κατάσ...</Task>
        <Task><OutlookIcon />Εισερχόμενα - Mi...</Task>
        <Task><ExcelIcon />Microsoft Excel - ...</Task>
        <Task><WordIcon />Έγγραφο1 - Micro...</Task>
        <Language>EN</Language>
        <Tray>
          <TrayToggle aria-label="Εμφάνιση κρυφών εικονιδίων"><TrayArrow /></TrayToggle>
          <OutlookIcon /><NetworkIcon />
          <time>10:08 πμ</time>
        </Tray>
      </Taskbar>
    </Window>
  );
}
